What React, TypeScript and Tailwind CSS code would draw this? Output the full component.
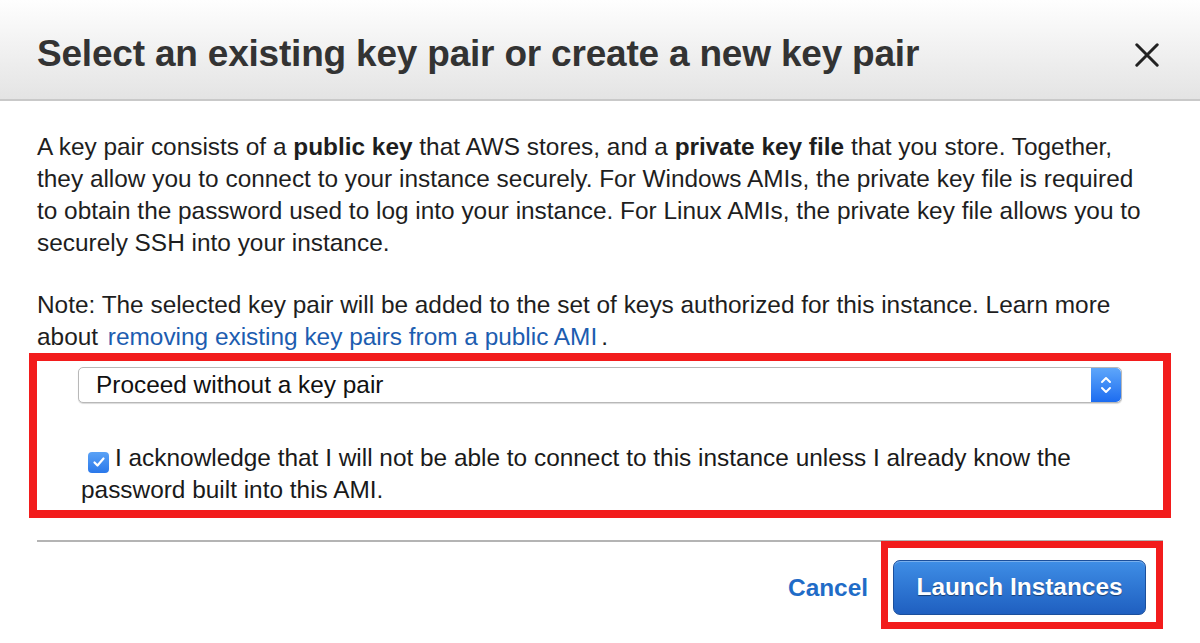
import React from 'react';

const font = { fontFamily: '"Liberation Sans", Arial, Helvetica, sans-serif' };

function CloseIcon() {
  return (
    <svg width="24" height="24" viewBox="0 0 24 24" className="shrink-0">
      <path d="M1.8 1.8 L22.2 22.2 M22.2 1.8 L1.8 22.2" stroke="#222" strokeWidth="3" strokeLinecap="round" />
    </svg>
  );
}

function Stepper() {
  return (
    <div className="w-[30px] h-full rounded-r-[5px] bg-gradient-to-b from-[#5ea6fa] to-[#1c6cf0] flex items-center justify-center">
      <svg width="12" height="22" viewBox="0 0 12 22">
        <path d="M2 8 L6 4 L10 8 M2 14 L6 18 L10 14" stroke="#fff" strokeWidth="2" fill="none" strokeLinecap="round" strokeLinejoin="round" />
      </svg>
    </div>
  );
}

function Checkbox() {
  return (
    <span className="inline-flex align-[-3px] ml-[7px] mr-[6px] w-[21px] h-[21px] rounded-[4px] bg-gradient-to-b from-[#5aa2f6] to-[#2a78ea] items-center justify-center">
      <svg width="14" height="14" viewBox="0 0 14 14">
        <path d="M2.5 7.5 L5.5 10.5 L11.5 3.5" stroke="#fff" strokeWidth="2.2" fill="none" strokeLinecap="round" strokeLinejoin="round" />
      </svg>
    </span>
  );
}

export default function App() {
  return (
    <div className="w-[1200px] h-[643px] bg-white overflow-hidden text-[#1e1e1e]" style={font}>
      {/* header */}
      <div className="h-[101px] pl-[37px] pr-[41px] flex items-start justify-between bg-gradient-to-b from-[#fefefe] to-[#e4e4e4] border-b-2 border-[#c9c9c9]">
        <h1 className="pt-[34px] text-[37px] leading-[40px] font-bold text-[#333] tracking-[-0.2px]">
          Select an existing key pair or create a new key pair
        </h1>
        <div className="pt-[43px]">
          <CloseIcon />
        </div>
      </div>

      {/* body */}
      <div className="px-[37px] pt-[30px] text-[24.4px] leading-[32px]">
        <p className="pr-[8px]">
          A key pair consists of a <b>public key</b> that AWS stores, and a <b>private key file</b> that you store. Together,
          they allow you to connect to your instance securely. For Windows AMIs, the private key file is required
          to obtain the password used to log into your instance. For Linux AMIs, the private key file allows you to
          securely SSH into your instance.
        </p>
        <p className="mt-[30px]">
          Note: The selected key pair will be added to the set of keys authorized for this instance. Learn more
          about <span className="text-[#1c5db0] ml-[3px]">removing existing key pairs from a public AMI</span>
          <span className="ml-[4px]">.</span>
        </p>

        <div className="-mx-[8px] border-[8px] border-[#f21c1c] px-[41px] pt-[6px] pb-[4px]">
          <div className="h-[36px] flex items-stretch rounded-[5px] border border-[#b8b8b8] shadow-[0_1px_1px_rgba(0,0,0,0.15)] bg-white">
            <div className="flex-1 flex items-center pl-[17px] text-[#111]">Proceed without a key pair</div>
            <Stepper />
          </div>
          <p className="mt-[39px] pl-[3px] text-[#1a1a1a]">
            <Checkbox />I acknowledge that I will not be able to connect to this instance unless I already know the
            password built into this AMI.
          </p>
        </div>

        <div className="mt-[22px] h-[2px] bg-[#b4b4b4]" />
      </div>

      {/* footer */}
      <div className="flex justify-end items-center pr-[37px] -mt-[1px]">
        <button className="text-[24.4px] font-bold text-[#1f6cc7] mr-[13px] pt-[7px]">Cancel</button>
        <div className="border-[7px] border-[#f21c1c] pl-[5px] pr-[10px] pt-[12px] pb-[7px] bg-white">
          <button className="w-[253px] h-[55px] rounded-[7px] border border-[#1b4f9c] bg-gradient-to-b from-[#3f8ee6] to-[#1f5fc0] text-white text-[24.4px] font-bold [text-shadow:0_1px_1px_rgba(0,0,0,0.45)] shadow-[inset_0_1px_0_rgba(255,255,255,0.3)]">
            Launch Instances
          </button>
        </div>
      </div>
    </div>
  );
}
